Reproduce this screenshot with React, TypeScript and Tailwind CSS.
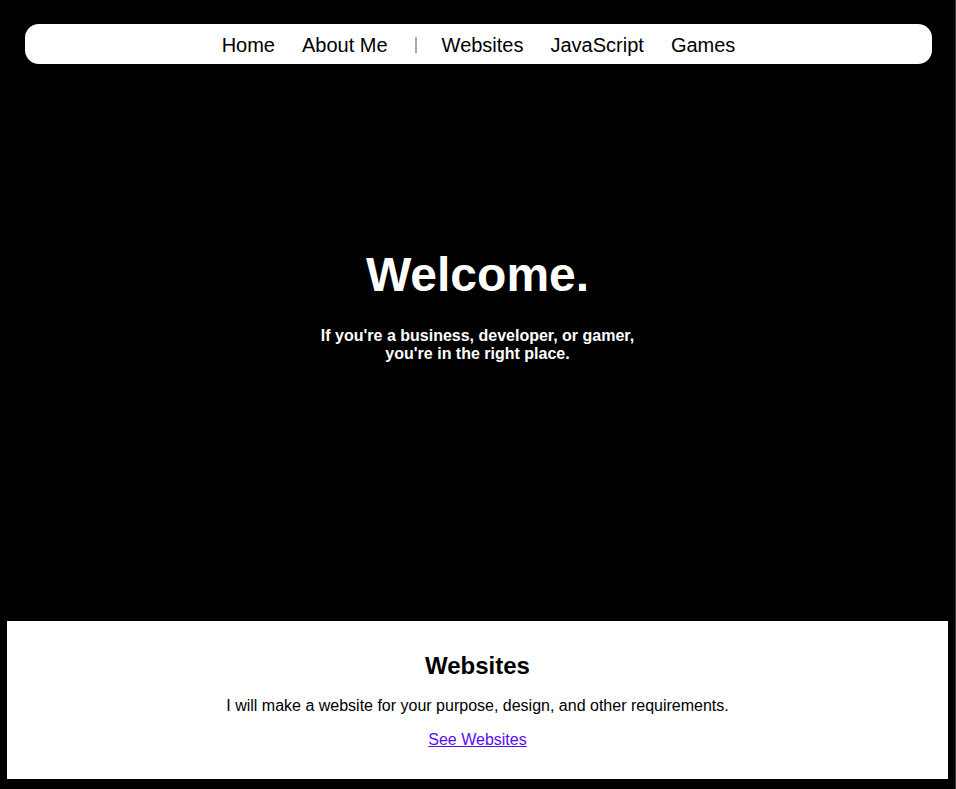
import React from 'react';

const navLeft = ['Home', 'About Me'];
const navRight = ['Websites', 'JavaScript', 'Games'];

const App: React.FC = () => {
    return (
        <div className="min-h-screen bg-black border-r border-[#3a3a3a] font-['Liberation_Sans',Arial,sans-serif] text-black">
            {/* top nav */}
            <div className="pt-6 pl-[25px] pr-[23px]">
                <nav className="h-10 bg-white rounded-[14px] flex items-center justify-center pt-[2px] text-[20px] leading-[24px]">
                    <div className="flex gap-[27px]">
                        {navLeft.map(item => (
                            <a key={item} href="#" className="text-black no-underline">{item}</a>
                        ))}
                    </div>
                    <div className="w-[2px] h-[16px] bg-[#a8a8a8] ml-[27px] mr-[25px]" />
                    <div className="flex gap-[27px]">
                        {navRight.map(item => (
                            <a key={item} href="#" className="text-black no-underline">{item}</a>
                        ))}
                    </div>
                </nav>
            </div>

            {/* hero */}
            <section className="h-[557px] pt-[182px] flex flex-col items-center text-white text-center">
                <h1 className="text-[48px] leading-[58px] font-bold">Welcome.</h1>
                <p className="mt-[23px] text-[16px] leading-[18px] font-bold max-w-[330px]">
                    If you're a business, developer, or gamer, you're in the right place.
                </p>
            </section>

            {/* websites card */}
            <section className="ml-[7px] mr-[7px] bg-white text-center pt-[30px] pb-[27px]">
                <h2 className="text-[24px] leading-[29px] font-bold">Websites</h2>
                <p className="mt-[17px] text-[16px] leading-[18px]">
                    I will make a website for your purpose, design, and other requirements.
                </p>
                <a href="#" className="inline-block mt-[16px] text-[16px] leading-[18px] text-[#5a0cf5] underline">
                    See Websites
                </a>
            </section>
            <div className="h-[10px]" />
        </div>
    );
};

export default App;
